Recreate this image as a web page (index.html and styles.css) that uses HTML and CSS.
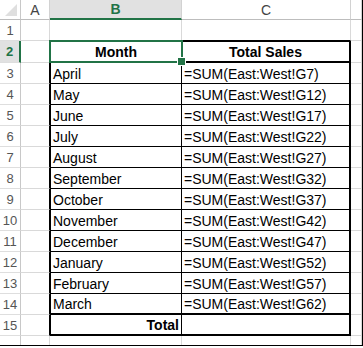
FILE: index.html
```html
<!DOCTYPE html>
<html lang="en">
<head>
    <meta charset="UTF-8">
    <title>Total Sales</title>
    <link rel="stylesheet" href="styles.css">
</head>
<body>
    <div class="frame">
        <div class="sheet">
            <!-- column headers -->
            <div class="corner"><span class="tri"></span></div>
            <div class="ch">A</div>
            <div class="ch sel">B</div>
            <div class="ch">C</div>
            <div class="ch"></div>

            <!-- row 1 -->
            <div class="rh">1</div>
            <div class="cell"></div>
            <div class="cell above"></div>
            <div class="cell above"></div>
            <div class="cell"></div>

            <!-- row 2 -->
            <div class="rh sel">2</div>
            <div class="cell edge"></div>
            <div class="cell t tb head active">Month</div>
            <div class="cell t tc head">Total Sales</div>
            <div class="cell"></div>

            <div class="rh">3</div>
            <div class="cell edge"></div>
            <div class="cell t tb">April</div>
            <div class="cell t tc">=SUM(East:West!G7)</div>
            <div class="cell"></div>

            <div class="rh">4</div>
            <div class="cell edge"></div>
            <div class="cell t tb">May</div>
            <div class="cell t tc">=SUM(East:West!G12)</div>
            <div class="cell"></div>

            <div class="rh">5</div>
            <div class="cell edge"></div>
            <div class="cell t tb">June</div>
            <div class="cell t tc">=SUM(East:West!G17)</div>
            <div class="cell"></div>

            <div class="rh">6</div>
            <div class="cell edge"></div>
            <div class="cell t tb">July</div>
            <div class="cell t tc">=SUM(East:West!G22)</div>
            <div class="cell"></div>

            <div class="rh">7</div>
            <div class="cell edge"></div>
            <div class="cell t tb">August</div>
            <div class="cell t tc">=SUM(East:West!G27)</div>
            <div class="cell"></div>

            <div class="rh">8</div>
            <div class="cell edge"></div>
            <div class="cell t tb">September</div>
            <div class="cell t tc">=SUM(East:West!G32)</div>
            <div class="cell"></div>

            <div class="rh">9</div>
            <div class="cell edge"></div>
            <div class="cell t tb">October</div>
            <div class="cell t tc">=SUM(East:West!G37)</div>
            <div class="cell"></div>

            <div class="rh">10</div>
            <div class="cell edge"></div>
            <div class="cell t tb">November</div>
            <div class="cell t tc">=SUM(East:West!G42)</div>
            <div class="cell"></div>

            <div class="rh">11</div>
            <div class="cell edge"></div>
            <div class="cell t tb">December</div>
            <div class="cell t tc">=SUM(East:West!G47)</div>
            <div class="cell"></div>

            <div class="rh">12</div>
            <div class="cell edge"></div>
            <div class="cell t tb">January</div>
            <div class="cell t tc">=SUM(East:West!G52)</div>
            <div class="cell"></div>

            <div class="rh">13</div>
            <div class="cell edge"></div>
            <div class="cell t tb">February</div>
            <div class="cell t tc">=SUM(East:West!G57)</div>
            <div class="cell"></div>

            <div class="rh">14</div>
            <div class="cell edge"></div>
            <div class="cell t tb before-total">March</div>
            <div class="cell t tc before-total">=SUM(East:West!G62)</div>
            <div class="cell"></div>

            <div class="rh">15</div>
            <div class="cell edge"></div>
            <div class="cell t tb total">Total</div>
            <div class="cell t tc total"></div>
            <div class="cell"></div>

            <!-- gridline stubs below -->
            <div class="rh stub"></div>
            <div class="cell stub"></div>
            <div class="cell stub"></div>
            <div class="cell stub"></div>
            <div class="cell stub"></div>
        </div>
    </div>
</body>
</html>
```

FILE: styles.css
```css
* {
    margin: 0;
    padding: 0;
    box-sizing: border-box;
}

body {
    font-family: "Liberation Sans", Arial, sans-serif;
    background: white;
    color: #000;
}

.frame {
    width: 363px;
    height: 346px;
    border-right: 1px solid #000;
    border-bottom: 1px solid #000;
    overflow: hidden;
}

.sheet {
    display: grid;
    grid-template-columns: 21px 29px 132px 169px 11px;
    grid-template-rows: 20px 21px 22px repeat(13, 21px) 9px;
}

/* headers */
.corner {
    position: relative;
    border-right: 1px solid #c8c8c8;
    border-bottom: 1px solid #bdbdbd;
}

.tri {
    position: absolute;
    right: 3px;
    bottom: 3px;
    width: 0;
    height: 0;
    border-left: 12px solid transparent;
    border-bottom: 12px solid #dfdfdf;
}

.ch {
    display: flex;
    align-items: center;
    justify-content: center;
    font-size: 14px;
    color: #444;
    border-right: 1px solid #d2d2d2;
    border-bottom: 1px solid #bdbdbd;
}

.ch.sel {
    background: #e1e1e1;
    color: #217346;
    font-weight: bold;
    border-bottom: 2px solid #217346;
}

.rh {
    display: flex;
    align-items: center;
    justify-content: center;
    font-size: 13px;
    color: #555;
    border-right: 1px solid #c8c8c8;
    border-bottom: 1px solid #dedede;
}

.rh.sel {
    background: #e1e1e1;
    color: #217346;
    font-weight: bold;
    border-right: 2px solid #217346;
}

/* cells */
.cell {
    display: flex;
    align-items: flex-end;
    padding: 0 2px 1px;
    font-size: 14px;
    white-space: nowrap;
    border-right: 1px solid #d9d9d9;
    border-bottom: 1px solid #d9d9d9;
}

.above {
    border-bottom-color: #000;
}

.edge {
    border-right-color: #000;
}

.t {
    border-right: 1px solid #000;
    border-bottom: 1px solid #000;
}

.tb {
    border-left: 1px solid #000;
}

.tc {
    border-right-width: 2px;
}

.head {
    justify-content: center;
    font-weight: bold;
    border-top: 1px solid #000;
    border-bottom-width: 2px;
}

.before-total {
    border-bottom-width: 2px;
}

.total {
    justify-content: flex-end;
    font-weight: bold;
    border-bottom-width: 2px;
}

.stub {
    border-bottom: none;
}

/* active cell selection */
.active {
    position: relative;
}

.active::after {
    content: "";
    position: absolute;
    top: -2px;
    left: -2px;
    right: -2px;
    bottom: -2px;
    border: 2px solid #217346;
}

.active::before {
    content: "";
    position: absolute;
    right: -5px;
    bottom: -5px;
    width: 7px;
    height: 7px;
    background: #217346;
    border: 1px solid #fff;
    z-index: 1;
}
```
